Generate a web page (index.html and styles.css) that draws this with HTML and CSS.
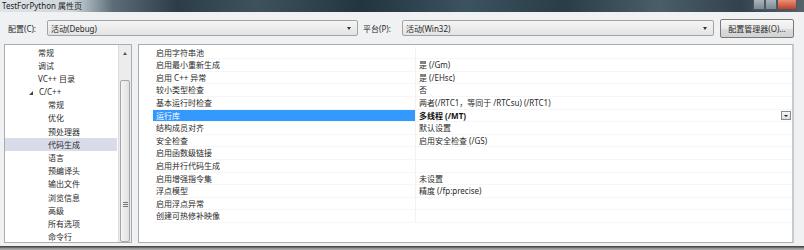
FILE: index.html
```html
<!DOCTYPE html>
<html>
<head>
<meta charset="utf-8"/>
<title>TestForPython 属性页</title>
<link rel="stylesheet" href="styles.css">
</head>
<body>
<div id="window">
	<div id="titlebar">
		<span class="caption">TestForPython 属性页</span>
		<span class="winbtns"><i class="wb"></i><i class="wb"></i><i class="wb close"></i></span>
	</div>
	<div id="toolbar">
		<span class="label">配置(C):</span>
		<div class="combo cfg"><span>活动(Debug)</span><i class="arrow"></i></div>
		<span class="label plat">平台(P):</span>
		<div class="combo pf"><span>活动(Win32)</span><i class="arrow"></i></div>
		<div class="button">配置管理器(O)...</div>
	</div>
	<div id="main">
		<div id="tree">
			<ul>
				<li class="l1">常规</li>
				<li class="l1">调试</li>
				<li class="l1">VC++ 目录</li>
				<li class="l1 open"><i class="tri"></i>C/C++</li>
				<li class="l2">常规</li>
				<li class="l2">优化</li>
				<li class="l2">预处理器</li>
				<li class="l2 sel">代码生成</li>
				<li class="l2">语言</li>
				<li class="l2">预编译头</li>
				<li class="l2">输出文件</li>
				<li class="l2">浏览信息</li>
				<li class="l2">高级</li>
				<li class="l2">所有选项</li>
				<li class="l2">命令行</li>
			</ul>
			<div class="vscroll">
				<div class="up"><i></i></div>
				<div class="thumb"><span class="grip"></span></div>
			</div>
		</div>
		<div id="grid">
			<div class="row"><span class="name">启用字符串池</span><span class="val"></span></div>
			<div class="row"><span class="name">启用最小重新生成</span><span class="val">是 (/Gm)</span></div>
			<div class="row"><span class="name">启用 C++ 异常</span><span class="val">是 (/EHsc)</span></div>
			<div class="row"><span class="name">较小类型检查</span><span class="val">否</span></div>
			<div class="row"><span class="name">基本运行时检查</span><span class="val">两者(/RTC1，等同于 /RTCsu) (/RTC1)</span></div>
			<div class="row sel"><span class="name">运行库</span><span class="val">多线程 (/MT)</span><i class="drop"></i></div>
			<div class="row"><span class="name">结构成员对齐</span><span class="val">默认设置</span></div>
			<div class="row"><span class="name">安全检查</span><span class="val">启用安全检查 (/GS)</span></div>
			<div class="row"><span class="name">启用函数级链接</span><span class="val"></span></div>
			<div class="row"><span class="name">启用并行代码生成</span><span class="val"></span></div>
			<div class="row"><span class="name">启用增强指令集</span><span class="val">未设置</span></div>
			<div class="row"><span class="name">浮点模型</span><span class="val">精度 (/fp:precise)</span></div>
			<div class="row"><span class="name">启用浮点异常</span><span class="val"></span></div>
			<div class="row"><span class="name">创建可热修补映像</span><span class="val"></span></div>
		</div>
	</div>
	<div id="bottom"></div>
</div>
</body>
</html>
```
FILE: styles.css
```css
body{margin:0;font-family:"Noto Sans","Noto Sans CJK SC",sans-serif;font-size:8px;color:#2a2a2a;}
ul{margin:0;padding:0;list-style:none;}
#window{width:804px;height:250px;overflow:hidden;background:#eff1f3;display:flex;flex-direction:column;}
#titlebar{height:12px;flex:none;display:flex;align-items:center;justify-content:space-between;background:linear-gradient(to right,#dfe4e8 0%,#cfd7dc 9%,#5d6e78 14%,#2c3d48 22%,#3e525d 32%,#223440 45%,#3c5360 58%,#2a3c47 70%,#4a5d68 82%,#33434d 92%,#56636b 100%);}
#titlebar .caption{padding-left:2px;color:#1c1c1c;font-size:8px;line-height:12px;}
.winbtns{display:flex;height:10px;margin-right:7px;align-self:flex-start;}
.wb{display:block;width:10px;height:9px;background:linear-gradient(#aab4bc,#7c8992);border:1px solid #4c5860;border-top:0;}
.wb.close{width:18px;background:linear-gradient(#e8917a,#c2412a);}
#toolbar{height:32px;flex:none;display:flex;align-items:center;padding:0 0 0 8px;}
.label{width:39px;}
.label.plat{width:39px;margin-left:5px;}
.combo{border:1px solid #a3a3a3;border-radius:2px;background:linear-gradient(#f5f5f5,#e3e3e3);display:flex;align-items:center;justify-content:space-between;padding:0 6px 0 3px;box-sizing:border-box;height:16px;}
.combo.cfg{width:311px;}
.combo.pf{width:312px;}
.arrow{width:0;height:0;border-left:2px solid transparent;border-right:2px solid transparent;border-top:3px solid #333;}
.button{margin-left:6px;width:74px;height:19px;box-sizing:border-box;border:1px solid #7a7a7a;border-radius:2px;background:linear-gradient(#f7f7f7 0%,#ececec 50%,#dddddd 51%,#d2d2d2 100%);display:flex;align-items:center;justify-content:center;}
#main{flex:1;display:flex;padding:0 10px 0 4px;gap:6px;min-height:0;}
#tree{width:128px;box-sizing:border-box;border:1px solid #a8adb2;background:#fff;display:flex;overflow:hidden;}
#tree ul{flex:1;padding-top:0.5px;}
#tree li{height:13.2px;line-height:13.2px;white-space:nowrap;}
#tree li.l1{padding-left:33px;}
#tree li.l2{padding-left:43px;}
#tree li.sel{background:#dadbe8;margin-right:1px;}
.tri{display:inline-block;width:0;height:0;border-left:4px solid transparent;border-bottom:4px solid #444;margin:0 6px 0 -9px;}
.vscroll{width:12px;background:#ececec;border-left:1px solid #dcdcdc;display:flex;flex-direction:column;}
.vscroll .up{height:17px;display:flex;justify-content:center;align-items:center;}
.vscroll .up i{width:0;height:0;border-left:2px solid transparent;border-right:2px solid transparent;border-bottom:3px solid #555;}
.vscroll .thumb{flex:1;margin:18px 1px 0;border:1px solid #a7a7a7;border-radius:2px;background:linear-gradient(to right,#f4f4f4,#e0e0e0);display:flex;align-items:flex-end;justify-content:center;padding-bottom:34px;}
.grip{width:5px;height:5px;background:repeating-linear-gradient(#777 0 1px,transparent 1px 2px);}
#grid{flex:1;box-sizing:border-box;border:1px solid #a8adb2;border-right:2px solid #c7cbcf;background:#fff;padding:1.7px 0 0 14px;}
.row{height:12.6px;line-height:12.6px;display:flex;border-bottom:1px solid #f6f6f6;box-sizing:border-box;position:relative;}
.row .name{width:259px;padding-left:3px;border-right:1px solid #f2f2f2;white-space:nowrap;}
.row .val{flex:1;padding-left:3px;white-space:nowrap;}
.row.sel .name{background:#3399ff;color:#fff;}
.row.sel .val{font-weight:bold;color:#111;}
.drop{position:absolute;right:1px;top:1px;width:10px;height:9px;box-sizing:border-box;border:1px solid #8a8a8a;background:linear-gradient(#f6f6f6,#dcdcdc);}
.drop::after{content:"";position:absolute;left:2px;top:3px;border-left:2px solid transparent;border-right:2px solid transparent;border-top:2px solid #222;}
#bottom{height:4px;flex:none;margin-top:3px;background:linear-gradient(#4a4a4a 0,#4a4a4a 1px,#8c8c8c 2px,#b5b5b5 4px);}
```
